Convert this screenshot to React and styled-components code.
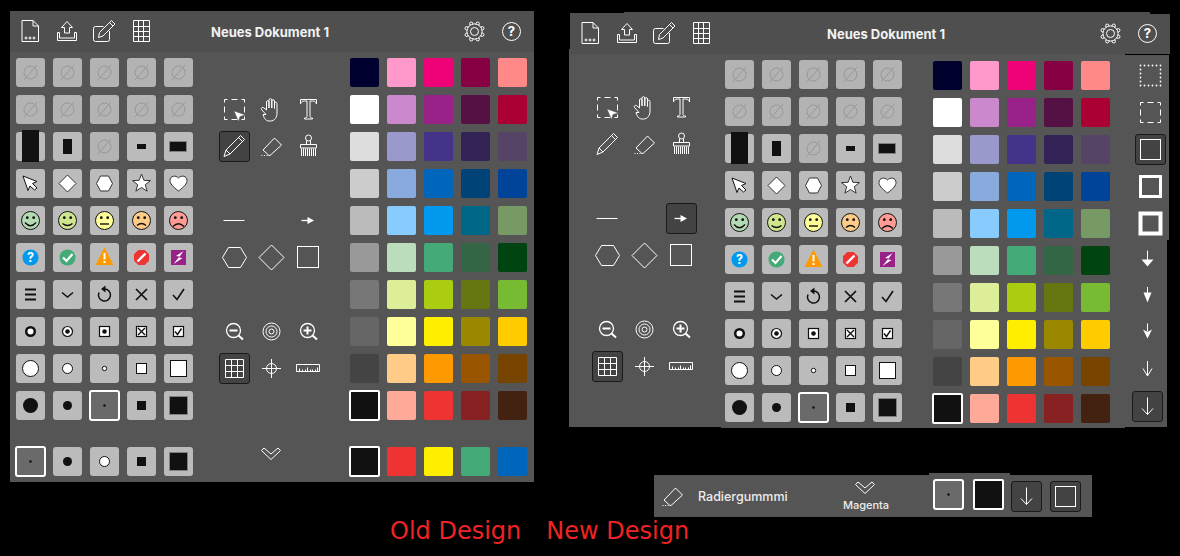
import React from 'react'
import styled, { createGlobalStyle } from 'styled-components'

const PANEL = '#555555'
const HEAD = '#4f4f4f'
const INK = '#111111'
const UI_FONT = 'Inter, "Liberation Sans", sans-serif'

const GlobalStyle = createGlobalStyle`
  html, body {
    margin: 0;
    background: #000;
  }
`

const Canvas = styled.div`
  position: relative;
  width: 1180px;
  height: 556px;
  background: #000;
  overflow: hidden;
  font-family: ${UI_FONT};
`

const OldWindow = styled.section`
  position: absolute;
  left: 10px;
  top: 11px;
  width: 524px;
  height: 471px;
  background: ${PANEL};
`

const NewWindow = styled.section`
  position: absolute;
  left: 569px;
  top: 12px;
  width: 601px;
  height: 416px;
`

const Header = styled.header`
  display: flex;
  align-items: center;
  height: 41px;
  padding: 0 4px 0 2px;
  box-sizing: border-box;
  background: ${HEAD};
  color: #fff;
`

const NewHeader = styled(Header)`
  height: 42px;
  margin-left: 1px;
  padding-top: 1px;
  clip-path: polygon(0 1px, 54px 1px, 54px 0, 580px 0, 580px 2px, 100% 2px, 100% 100%, 0 100%);
`

const IconGroup = styled.div`
  display: flex;
  margin-left: ${(p) => (p.$end ? 'auto' : '0')};
`

const HeadIcon = styled.div`
  display: flex;
  align-items: center;
  justify-content: center;
  width: 37px;
`

const Title = styled.h1`
  margin: 0 0 0 ${(p) => p.$offset}px;
  font-size: 13px;
  font-weight: 700;
  line-height: 16px;
  color: #f2f2f2;
`

const OldBody = styled.div`
  display: grid;
  grid-template-columns: 177px 105px 177px;
  column-gap: 26px;
  row-gap: 27px;
  padding: 6px 0 0 6px;
`

const NewBody = styled.div`
  display: flex;
  align-items: flex-start;
`

const ToolPane = styled.div`
  width: 152px;
  height: 378px;
  margin-top: -5px;
  padding: 7px 0 0 23px;
  box-sizing: border-box;
  background: ${PANEL};
`

const MainPane = styled.div`
  display: flex;
  align-items: flex-start;
  gap: 31px;
  width: 404px;
  height: 374px;
  padding: 6px 0 0 4px;
  box-sizing: border-box;
  background: ${PANEL};
`

const SidePane = styled.div`
  display: flex;
  flex-direction: column;
  margin-top: 1px;
`

const SideUpper = styled.div`
  display: grid;
  grid-template-columns: 31px;
  grid-auto-rows: 29px;
  row-gap: 8px;
  align-items: center;
  width: 44px;
  height: 185px;
  padding: 6px 0 0 10px;
  box-sizing: border-box;
  background: ${PANEL};
`

const SideLower = styled.div`
  display: grid;
  grid-template-columns: 31px;
  grid-auto-rows: 29px;
  row-gap: 7.5px;
  align-items: center;
  width: 42px;
  height: 187px;
  padding: 6px 0 0 7px;
  box-sizing: border-box;
  background: ${PANEL};
`

const Matrix = styled.div`
  display: grid;
  grid-template-columns: repeat(5, 29px);
  grid-auto-rows: 29px;
  gap: 8px;
  margin-top: ${(p) => p.$drop || 0}px;
`

const ToolMatrix = styled.div`
  display: grid;
  grid-template-columns: repeat(3, 31px);
  grid-auto-rows: 29px;
  column-gap: 6px;
  row-gap: 8px;
  align-items: center;
`

const Cell = styled.div`
  display: flex;
  align-items: center;
  justify-content: center;
  box-sizing: border-box;
  width: ${(p) => (p.$picked ? 31 : 29)}px;
  height: ${(p) => (p.$picked ? 31 : 29)}px;
  margin: ${(p) => (p.$picked ? '-1px' : '0')};
  background: ${(p) => (p.$picked ? '#6a6a6a' : p.$off ? '#b3b3b3' : '#bbbbbb')};
  border: ${(p) => (p.$picked ? '2px solid #fff' : 'none')};
  border-radius: 3px;
  color: ${INK};
`

const Swatch = styled.div`
  box-sizing: border-box;
  width: ${(p) => (p.$picked ? 31 : 29)}px;
  height: ${(p) => (p.$picked ? 31 : 29)}px;
  margin: ${(p) => (p.$picked ? '-1px' : '0')};
  background: ${(p) => p.$color};
  border: ${(p) => (p.$picked ? '2px solid #fff' : 'none')};
  border-radius: 2px;
`

const Tool = styled.div`
  display: flex;
  align-items: center;
  justify-content: center;
  box-sizing: border-box;
  width: 31px;
  height: 31px;
  background: ${(p) => (p.$on ? '#434343' : 'transparent')};
  border: 1px solid ${(p) => (p.$on ? '#1a1a1a' : 'transparent')};
  border-radius: 3px;
  color: #fff;
`

const ChevronSlot = styled.div`
  display: flex;
  justify-content: center;
  align-items: flex-start;
  padding-right: 2px;
  color: #fff;
`

const Bar = styled.section`
  position: absolute;
  left: 654px;
  top: 475px;
  display: flex;
  align-items: center;
  width: 438px;
  height: 42px;
  padding-left: 2px;
  box-sizing: border-box;
  background: ${PANEL};
  color: #fff;
`

const BarLabel = styled.span`
  width: 90px;
  margin-left: 9px;
  font-size: 12.5px;
  font-weight: 500;
  color: #ececec;
  white-space: nowrap;
`

const BarPicker = styled.div`
  display: flex;
  flex-direction: column;
  align-items: center;
  gap: 4px;
  width: 60px;
  margin-left: 48px;
  font-size: 11px;
  font-weight: 500;
  line-height: 13px;
  color: #ececec;
`

const BarTab = styled.div`
  display: flex;
  gap: 11px;
  align-self: flex-start;
  height: 44px;
  margin: -2px 1px 0 33px;
  padding: 7px 7px 0 5px;
  box-sizing: border-box;
  background: ${PANEL};
`

const BarTools = styled.div`
  display: flex;
  gap: 8px;
`

const Caption = styled.div`
  position: absolute;
  left: 390px;
  top: 517px;
  display: flex;
  gap: 25px;
  font-family: "DejaVu Sans", sans-serif;
  font-size: 24px;
  line-height: 28px;
  color: #ee2424;
`

const Svg = styled.svg`
  flex: none;
  width: ${(p) => p.$w || 33}px;
  height: ${(p) => p.$h || 33}px;
  fill: none;
  stroke: currentColor;
  stroke-width: 1;
  overflow: visible;
`

const GlyphText = styled.text`
  font-family: ${UI_FONT};
  font-weight: 700;
  text-anchor: middle;
  stroke: none;
`

const gearBumps = [0, 45, 90, 135, 180, 225, 270, 315].map((a) => ({
  x: 16 + 8.4 * Math.cos((a * Math.PI) / 180 + 0.39),
  y: 16 + 8.4 * Math.sin((a * Math.PI) / 180 + 0.39),
}))

const face = (color, mouth) => (
  <>
    <circle cx="16" cy="16" r="9" fill={color} stroke={INK} />
    <circle cx="12.8" cy="13.2" r="1.4" fill={INK} stroke="none" />
    <circle cx="19.2" cy="13.2" r="1.4" fill={INK} stroke="none" />
    <path d={mouth} stroke={INK} strokeWidth="1.4" />
  </>
)

const disc = (r, fill = '#fff') => <circle cx="16" cy="16" r={r} fill={fill} stroke={fill === '#fff' ? INK : 'none'} />
const box = (s, fill = '#fff') => (
  <rect x={16 - s / 2} y={16 - s / 2} width={s} height={s} fill={fill} stroke={fill === '#fff' ? INK : 'none'} />
)
const tickBox = <rect x="11" y="11" width="10" height="10" fill="#fff" stroke={INK} strokeWidth="1.2" />

const glyphs = {
  file: (
    <>
      <path d="M8 5.5h11l5.5 5.5v15.5H8zM19 5.5V11h5.5" />
      <circle cx="12" cy="23" r="1" />
      <circle cx="16" cy="23" r="1" />
      <circle cx="20" cy="23" r="1" />
    </>
  ),
  upload: <path d="M16 6.5 10.5 12.5h3V18h5v-5.5h3zM6.5 17.5h2V23h15v-5.5h2v8h-19z" />,
  edit: (
    <path d="M21.5 16v8.5a2 2 0 0 1-2 2h-12a2 2 0 0 1-2-2v-11a2 2 0 0 1 2-2h8M11.5 17.5 23.5 5.5 27 9 15 21l-4.5 1.5zM21.5 7.5 25 11" />
  ),
  table: <path d="M8.5 5.5h16v21h-16zM13.5 5.5v21M18.5 5.5v21M8.5 11.5h16M8.5 16.5h16M8.5 21.5h16" />,
  gear: (
    <>
      {gearBumps.map((b, i) => (
        <circle key={i} cx={b.x} cy={b.y} r="1.7" />
      ))}
      <circle cx="16" cy="16" r="7.6" fill={HEAD} />
      <circle cx="16" cy="16" r="4" />
    </>
  ),
  help: (
    <>
      <circle cx="16" cy="16" r="9" />
      <GlyphText x="16" y="20.5" fontSize="13" fill="currentColor">?</GlyphText>
    </>
  ),
  select: (
    <>
      <rect x="6.5" y="6.5" width="20" height="20" strokeDasharray="6 4" strokeDashoffset="3" />
      <path d="M16 18l11.5 4-5.5 1.5-1.5 5z" fill="currentColor" stroke={PANEL} strokeWidth="0.5" />
    </>
  ),
  hand: (
    <path d="M11 21.5 6.500 16.500c-1-1.500 1-3 2.500-1.500l2.500 2V9c0-1.800 2.500-1.800 2.500 0v6V7c0-1.800 2.800-1.800 2.800 0v8V8c0-1.800 2.700-1.800 2.700 0v7.500V10.500c0-1.800 2.500-1.800 2.500 0V20c0 4.500-2.500 8-6.500 8h-1.500c-2.500 0-4.500-1.500-6-6.500z" />
  ),
  type: (
    <path d="M8.5 6.5h16V11c-.5-2-1.500-3-4-3H18v15.500c0 1 1 1.500 2.500 1.500v1h-8v-1c1.500 0 2.500-.5 2.500-1.500V8h-2.500C10 8 9 9 8.500 11z" />
  ),
  pencil: <path d="M6 26.500 8 20 22.500 5.500 26.500 9.500 12 24zM8 20l4 4M20.500 7.500l4 4" />,
  eraser: (
    <>
      <path d="M19.5 8l7 7L15 25.500h-1L8 20z" />
      <path d="M6.500 25.500h7" strokeDasharray="1 1.500" />
    </>
  ),
  brush: (
    <>
      <circle cx="16.500" cy="8" r="3" />
      <path d="M14.500 10.500V14M18.500 10.500V14M8.500 14.500h16v3.500h-16zM9.500 18.500v7.500M11.500 18.500v7.500M13.500 18.500v7.500M15.500 18.500v7.500M17.500 18.500v7.500M19.500 18.500v7.500M21.500 18.500v7.500M23.500 18.500v7.500" />
    </>
  ),
  line: <path d="M5.500 16.500h21" />,
  arrowLine: (
    <>
      <path d="M9.500 16.500H17" strokeWidth="1.300" />
      <path d="M15.500 13 22 16.500 15.500 20z" fill="currentColor" stroke="none" />
    </>
  ),
  hexagon: <path d="M4 16 10 6h12l6 10-6 10H10z" />,
  diamond: <path d="M16 3.500 28.500 16 16 28.500 3.500 16z" />,
  square: <rect x="5.500" y="5.500" width="21" height="21" />,
  zoomOut: (
    <>
      <circle cx="15.500" cy="15.500" r="7" strokeWidth="1.300" />
      <path d="M11.500 15.500h8M20.500 20.500l4.500 4" strokeWidth="2" />
    </>
  ),
  zoomIn: (
    <>
      <circle cx="15.500" cy="15.500" r="7" strokeWidth="1.300" />
      <path d="M11.500 15.500h8M15.500 11.500v8M20.500 20.500l4.500 4" strokeWidth="2" />
    </>
  ),
  target: (
    <>
      <circle cx="16" cy="16" r="8.500" />
      <circle cx="16" cy="16" r="5.500" />
      <circle cx="16" cy="16" r="2.500" />
    </>
  ),
  grid: <path d="M7.500 7.500h18v18h-18zM13.500 7.500v18M19.500 7.500v18M7.500 13.500h18M7.500 19.500h18" />,
  crosshair: (
    <>
      <circle cx="16" cy="16" r="5" />
      <path d="M16 6.500v19M6.500 16h19" />
    </>
  ),
  ruler: (
    <path d="M4.500 12.500h23v7h-23zM7.500 19.500v-3M10.500 19.500v-2M13.500 19.500v-2M15.500 19.500v-4M18.500 19.500v-2M20.500 19.500v-2M23.500 19.500v-2M25.500 19.500v-4" />
  ),
  empty: (
    <g stroke="#989898">
      <circle cx="16" cy="16" r="6.500" />
      <path d="M9.500 23.500 22.500 8.500" />
    </g>
  ),
  tallBar: <rect x="8" y="0" width="17" height="32" fill={INK} stroke="none" />,
  midBar: <rect x="12" y="9" width="9" height="15" fill={INK} stroke="none" />,
  stubBar: <rect x="12" y="14" width="9" height="5" fill={INK} stroke="none" />,
  wideBar: <rect x="7.500" y="11.500" width="17" height="10" fill={INK} stroke="#808080" />,
  cursor: <path d="M9 9l14 5.500-4.500 2 4.500 4.500-2.500 2-4.500-4-2 4.500z" fill="#fff" stroke={INK} />,
  shapeDiamond: <path d="M16 7.500 24.500 16 16 24.500 7.500 16z" fill="#fff" stroke="#333" />,
  shapeHexagon: <path d="M8 16l4-7.500h8l4 7.500-4 7.500h-8z" fill="#fff" stroke="#333" />,
  shapeStar: (
    <path d="M16 6.500 18.400 12.800 25 13.100 19.800 17.200 21.600 23.700 16 20 10.400 23.700 12.200 17.200 7 13.100 13.600 12.800z" fill="#fff" stroke="#333" />
  ),
  shapeHeart: (
    <path d="M16 23.500C10 19 7.500 16 7.500 13c0-5 6-5.500 8.500-2.500 2.500-3 8.500-2.500 8.500 2.500 0 3-2.500 6-8.500 10.500z" fill="#fff" stroke="#333" />
  ),
  faceGreen: face('#b4dab4', 'M10.500 18Q16 24.500 21.500 18'),
  faceLime: face('#d0e68e', 'M11 19Q16 23 21 19'),
  faceYellow: face('#ffff99', 'M11.500 19.500h9'),
  faceOrange: face('#ffcc88', 'M11.500 21Q16 17 20.500 21'),
  faceRed: face('#ff9a94', 'M10.500 22Q16 16.500 21.500 22'),
  statusHelp: (
    <>
      <circle cx="16" cy="16" r="8" fill="#0099ee" stroke="none" />
      <GlyphText x="16" y="20.500" fontSize="12.500" fill="#fff">?</GlyphText>
    </>
  ),
  statusOk: (
    <>
      <circle cx="16" cy="16" r="8" fill="#44aa77" stroke="none" />
      <path d="M11.500 16l3.500 3.500 6-7" stroke="#fff" strokeWidth="2.200" />
    </>
  ),
  statusWarn: (
    <>
      <path d="M16 6l9 17.500H7z" fill="#ff9900" stroke="none" />
      <path d="M16 11.500v6.500M16 19.500v2" stroke="#fff" strokeWidth="2" />
    </>
  ),
  statusStop: (
    <>
      <path d="M12.800 8.500h6.400l4.300 4.300v6.400l-4.300 4.300h-6.400l-4.300-4.300v-6.400z" fill="#ee3333" stroke="none" />
      <path d="M12 20l8-8" stroke="#fff" strokeWidth="2.400" />
    </>
  ),
  statusBolt: (
    <>
      <rect x="8.500" y="8.500" width="15" height="15" fill="#992288" stroke="none" />
      <path d="M21 9.500 13.500 14.500l3.500.5-6 7.500 9-6-3.500-.5z" fill="#fff" stroke="none" />
    </>
  ),
  menu: <path d="M10.500 11h11M10.500 16h11M10.500 21h11" strokeWidth="1.800" />,
  chevron: <path d="M10.500 14l5.500 4.500 5.500-4.500" strokeWidth="1.500" />,
  undo: (
    <>
      <path d="M16 10.500a6 6 0 1 1-5.500 3.500" strokeWidth="1.500" />
      <path d="M17 7v7l-4.500-3.500z" fill="currentColor" stroke="none" />
    </>
  ),
  cross: <path d="M10.500 10.500l11 11M21.500 10.500l-11 11" strokeWidth="1.700" />,
  tick: <path d="M10.500 16.500l4 4.500 7-10.500" strokeWidth="1.600" />,
  ringBold: <circle cx="16" cy="16" r="4.300" fill="#fff" stroke={INK} strokeWidth="2.500" />,
  ringDot: (
    <>
      <circle cx="16" cy="16" r="5" fill="#fff" stroke={INK} strokeWidth="1.200" />
      {disc(2.3, INK)}
    </>
  ),
  boxDot: (
    <>
      {tickBox}
      {disc(2.3, INK)}
    </>
  ),
  boxCross: (
    <>
      {tickBox}
      <path d="M12.500 12.500l7 7M19.500 12.500l-7 7" stroke={INK} strokeWidth="1.400" />
    </>
  ),
  boxTick: (
    <>
      {tickBox}
      <path d="M12.500 16l2.500 3 4-6" stroke={INK} strokeWidth="1.400" />
    </>
  ),
  whiteDiscL: disc(8),
  whiteDiscM: disc(5),
  whiteDiscS: disc(2.2),
  whiteBoxS: box(10),
  whiteBoxL: box(16),
  blackDiscL: disc(7.5, INK),
  blackDiscM: disc(4.5, INK),
  blackDiscS: disc(1.3, INK),
  blackBoxS: box(9, INK),
  blackBoxL: <rect x="7" y="7" width="18" height="18" fill={INK} stroke="#808080" />,
  borderDots: <rect x="6.500" y="6.500" width="20" height="20" strokeDasharray="0 4" strokeLinecap="round" strokeWidth="1.800" />,
  borderDash: <rect x="6.500" y="6.500" width="20" height="20" strokeDasharray="6 4" strokeDashoffset="3" />,
  borderThin: <rect x="6.500" y="6.500" width="20" height="20" />,
  borderMid: <rect x="6.500" y="6.500" width="20" height="20" strokeWidth="3" />,
  borderThick: <rect x="6.500" y="6.500" width="20" height="20" strokeWidth="4" />,
  headFlat: (
    <>
      <path d="M16.500 6.500v11" />
      <path d="M10.500 15.500h12l-6 7z" fill="currentColor" stroke="none" />
    </>
  ),
  headNarrow: (
    <>
      <path d="M16.500 6v6" />
      <path d="M12.500 11.500h8l-4 10z" fill="currentColor" stroke="none" />
    </>
  ),
  headNotch: (
    <>
      <path d="M16.500 6.500v8" />
      <path d="M12 12.500l4.500 2.500 4.500-2.500-4.500 9z" fill="currentColor" stroke="none" />
    </>
  ),
  headOpen: <path d="M16.500 7v14.500M12 14.500 16.500 22l4.500-7.500" />,
  headPlain: <path d="M16.500 7.500v17M11 18.500l5.500 6 5.500-6" />,
}

// glyphs drawn round the cell centre, the others keep crisp 1px strokes
const CENTERED = /^(face|status|shape|ring|box|whiteDisc|blackDisc|whiteBox|blackBox)|^(gear|help|target|crosshair|empty|menu|chevron|undo|cross|tick|hexagon|diamond)$/

const Glyph = ({ name }) => (
  <Svg viewBox={CENTERED.test(name) ? '-0.5 -0.5 33 33' : '0 0 33 33'}>{glyphs[name]}</Svg>
)

const DoubleChevron = () => (
  <ChevronSlot>
    <Svg $w={20} $h={14} viewBox="0 0 20 14">
      <path d="M3 1l7 6 7-6 2.500 2.500-9.500 9-9.500-9z" />
    </Svg>
  </ChevronSlot>
)

const CELLS = [
  [{ off: 1 }, { off: 1 }, { off: 1 }, { off: 1 }, { off: 1 }],
  [{ off: 1 }, { off: 1 }, { off: 1 }, { off: 1 }, { off: 1 }],
  ['tallBar', 'midBar', { off: 1 }, 'stubBar', 'wideBar'],
  ['cursor', 'shapeDiamond', 'shapeHexagon', 'shapeStar', 'shapeHeart'],
  ['faceGreen', 'faceLime', 'faceYellow', 'faceOrange', 'faceRed'],
  ['statusHelp', 'statusOk', 'statusWarn', 'statusStop', 'statusBolt'],
  ['menu', 'chevron', 'undo', 'cross', 'tick'],
  ['ringBold', 'ringDot', 'boxDot', 'boxCross', 'boxTick'],
  ['whiteDiscL', 'whiteDiscM', 'whiteDiscS', 'whiteBoxS', 'whiteBoxL'],
  ['blackDiscL', 'blackDiscM', { name: 'blackDiscS', picked: 1 }, 'blackBoxS', 'blackBoxL'],
].flat()

const QUICK_CELLS = [{ name: 'blackDiscS', picked: 1 }, 'blackDiscM', 'whiteDiscM', 'blackBoxS', 'blackBoxL']

const COLORS = [
  ['#00002e', '#ff99cc', '#ee0077', '#880044', '#ff8888'],
  ['#ffffff', '#cc88cc', '#992288', '#551144', '#aa0033'],
  ['#dddddd', '#9999cc', '#443388', '#332255', '#554466'],
  ['#cccccc', '#88aadd', '#0066bb', '#004477', '#004499'],
  ['#bbbbbb', '#88ccff', '#0099ee', '#006688', '#779966'],
  ['#999999', '#bbddbb', '#44aa77', '#336644', '#004411'],
  ['#777777', '#ddee99', '#aacc11', '#667711', '#77bb33'],
  ['#666666', '#ffff99', '#ffee00', '#998800', '#ffcc00'],
  ['#444444', '#ffcc88', '#ff9900', '#995500', '#774400'],
  ['#111111', '#ffaa99', '#ee3333', '#882222', '#442211'],
].flat()

const QUICK_COLORS = ['#111111', '#ee3333', '#ffee00', '#44aa77', '#0066bb']

const TOOL_ROWS = [
  [],
  ['select', 'hand', 'type'],
  ['pencil', 'eraser', 'brush'],
  [],
  ['line', null, 'arrowLine'],
  ['hexagon', 'diamond', 'square'],
  [],
  ['zoomOut', 'target', 'zoomIn'],
  ['grid', 'crosshair', 'ruler'],
  [],
]

const CellGrid = ({ cells }) => (
  <Matrix>
    {cells.map((c, i) => {
      const spec = typeof c === 'string' ? { name: c } : c
      return (
        <Cell key={i} $off={spec.off} $picked={spec.picked}>
          <Glyph name={spec.name || 'empty'} />
        </Cell>
      )
    })}
  </Matrix>
)

const ColorGrid = ({ colors, drop }) => (
  <Matrix $drop={drop}>
    {colors.map((color, i) => (
      <Swatch key={i} $color={color} $picked={color === '#111111'} />
    ))}
  </Matrix>
)

const Tools = ({ active }) => (
  <ToolMatrix>
    {TOOL_ROWS.flatMap((row, r) =>
      [0, 1, 2].map((c) => (
        <Tool key={`${r}-${c}`} $on={row[c] && active.includes(row[c])}>
          {row[c] && <Glyph name={row[c]} />}
        </Tool>
      )),
    )}
  </ToolMatrix>
)

const FileIcons = () => (
  <IconGroup>
    {['file', 'upload', 'edit', 'table'].map((name) => (
      <HeadIcon key={name}>
        <Glyph name={name} />
      </HeadIcon>
    ))}
  </IconGroup>
)

const SettingIcons = () => (
  <IconGroup $end>
    {['gear', 'help'].map((name) => (
      <HeadIcon key={name}>
        <Glyph name={name} />
      </HeadIcon>
    ))}
  </IconGroup>
)

const SideTool = ({ name, on }) => (
  <Tool $on={on}>
    <Glyph name={name} />
  </Tool>
)

export default function App() {
  return (
    <Canvas>
      <GlobalStyle />

      <OldWindow>
        <Header>
          <FileIcons />
          <Title $offset={51}>Neues Dokument 1</Title>
          <SettingIcons />
        </Header>
        <OldBody>
          <CellGrid cells={CELLS} />
          <Tools active={['pencil', 'grid']} />
          <ColorGrid colors={COLORS} />
          <CellGrid cells={QUICK_CELLS} />
          <DoubleChevron />
          <ColorGrid colors={QUICK_COLORS} />
        </OldBody>
      </OldWindow>

      <NewWindow>
        <NewHeader>
          <FileIcons />
          <Title $offset={107}>Neues Dokument 1</Title>
          <SettingIcons />
        </NewHeader>
        <NewBody>
          <ToolPane>
            <Tools active={['arrowLine', 'grid']} />
          </ToolPane>
          <MainPane>
            <CellGrid cells={CELLS} />
            <ColorGrid colors={COLORS} drop={1} />
          </MainPane>
          <SidePane>
            <SideUpper>
              <SideTool name="borderDots" />
              <SideTool name="borderDash" />
              <SideTool name="borderThin" on />
              <SideTool name="borderMid" />
              <SideTool name="borderThick" />
            </SideUpper>
            <SideLower>
              <SideTool name="headFlat" />
              <SideTool name="headNarrow" />
              <SideTool name="headNotch" />
              <SideTool name="headOpen" />
              <SideTool name="headPlain" on />
            </SideLower>
          </SidePane>
        </NewBody>
      </NewWindow>

      <Bar>
        <Glyph name="eraser" />
        <BarLabel>Radiergummmi</BarLabel>
        <BarPicker>
          <DoubleChevron />
          Magenta
        </BarPicker>
        <BarTab>
          <Cell $picked>
            <Glyph name="blackDiscS" />
          </Cell>
          <Swatch $color="#111111" $picked />
        </BarTab>
        <BarTools>
          <SideTool name="headPlain" on />
          <SideTool name="borderThin" on />
        </BarTools>
      </Bar>

      <Caption>
        <span>Old Design</span>
        <span>New Design</span>
      </Caption>
    </Canvas>
  )
}
